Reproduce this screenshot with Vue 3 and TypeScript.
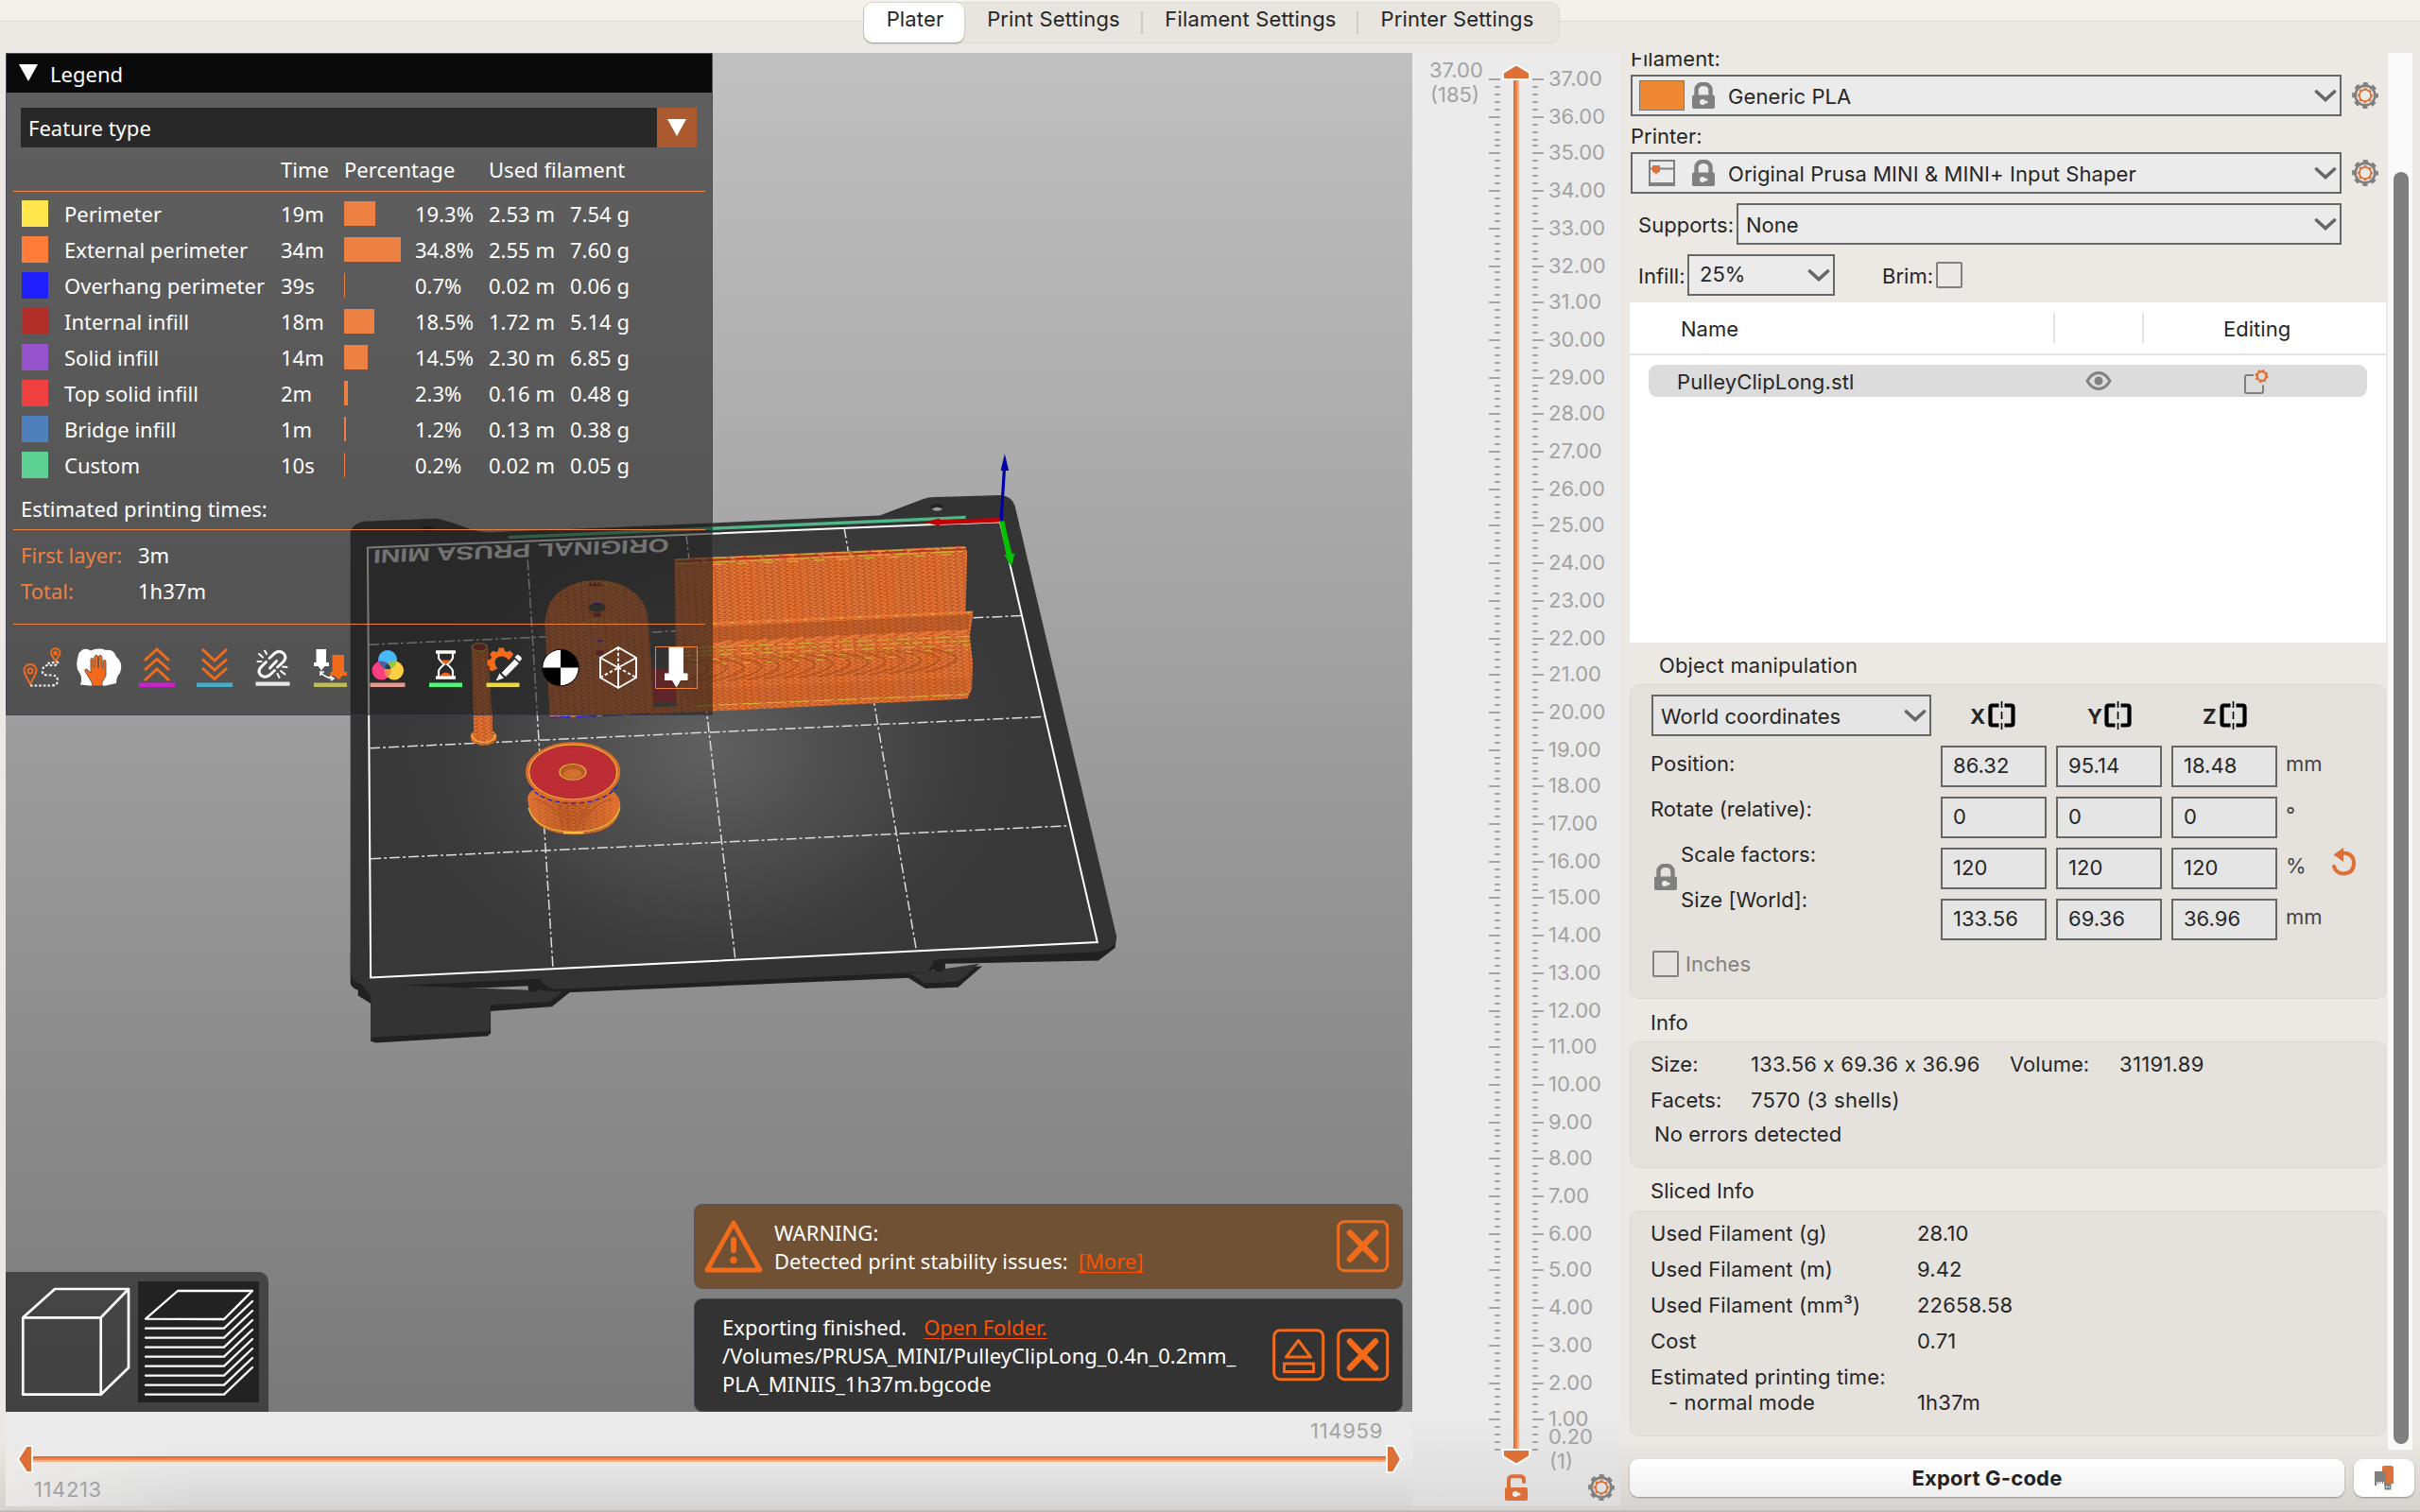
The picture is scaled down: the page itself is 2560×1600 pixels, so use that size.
<script setup lang="ts">
interface Feature {
  name: string
  color: string
  time: string
  bar: number
  pct: string
  metres: string
  grams: string
}

const features: Feature[] = [
  { name: 'Perimeter', color: '#ffe64d', time: '19m', bar: 33, pct: '19.3%', metres: '2.53 m', grams: '7.54 g' },
  { name: 'External perimeter', color: '#ff7d38', time: '34m', bar: 60, pct: '34.8%', metres: '2.55 m', grams: '7.60 g' },
  { name: 'Overhang perimeter', color: '#1f1fff', time: '39s', bar: 1, pct: '0.7%', metres: '0.02 m', grams: '0.06 g' },
  { name: 'Internal infill', color: '#b03029', time: '18m', bar: 32, pct: '18.5%', metres: '1.72 m', grams: '5.14 g' },
  { name: 'Solid infill', color: '#9654cc', time: '14m', bar: 25, pct: '14.5%', metres: '2.30 m', grams: '6.85 g' },
  { name: 'Top solid infill', color: '#f04040', time: '2m', bar: 4, pct: '2.3%', metres: '0.16 m', grams: '0.48 g' },
  { name: 'Bridge infill', color: '#4d80ba', time: '1m', bar: 2, pct: '1.2%', metres: '0.13 m', grams: '0.38 g' },
  { name: 'Custom', color: '#5ed194', time: '10s', bar: 1, pct: '0.2%', metres: '0.02 m', grams: '0.05 g' },
]

const tabs = ['Plater', 'Print Settings', 'Filament Settings', 'Printer Settings']

// One tick per 0.2 mm layer, snapped to the device grid.
const ticks = Array.from({ length: 185 }, (_, k) => ({
  y: 2 * Math.round((84 + k * 7.88) / 2) - 57,
  major: k % 5 === 0,
  label: k % 5 === 0 ? (37 - k / 5).toFixed(2) : '',
}))

const axes = ['X', 'Y', 'Z']
const manipulation = [
  { values: ['86.32', '95.14', '18.48'], unit: 'mm' },
  { values: ['0', '0', '0'], unit: '°' },
  { values: ['120', '120', '120'], unit: '%' },
  { values: ['133.56', '69.36', '36.96'], unit: 'mm' },
]

const sliced = [
  ['Used Filament (g)', '28.10'],
  ['Used Filament (m)', '9.42'],
  ['Used Filament (mm³)', '22658.58'],
  ['Cost', '0.71'],
]

const layers = [0, 1, 2, 3, 4, 5, 6, 7]
const waves = Array.from({ length: 15 }, (_, i) => i)
</script>

<template>
  <div class="app">
    <svg class="defs" width="0" height="0">
      <symbol id="lock" viewBox="0 0 24 28">
        <path d="M4.5 15V8a7.5 6.3 0 0 1 15 0v7" fill="none" stroke="#808080" stroke-width="4.4" />
        <rect y="13.5" width="24" height="14.5" rx="2" fill="#808080" />
        <circle cx="11" cy="21" r="3" fill="#ebebeb" /><rect x="11" y="19.8" width="5.5" height="2.6" rx="1.2" fill="#ebebeb" />
      </symbol>
      <symbol id="gear" viewBox="0 0 28 28">
        <circle cx="14" cy="14" r="12.3" fill="none" stroke="#808080" stroke-width="3.2" stroke-dasharray="5.2 4.46" stroke-dashoffset="2.6" />
        <circle cx="14" cy="14" r="10.4" fill="none" stroke="#808080" stroke-width="2.6" />
        <circle cx="14" cy="14" r="6.2" fill="none" stroke="#dc7036" stroke-width="1.8" />
        <circle cx="14" cy="14" r="7.4" fill="none" stroke="#dc7036" stroke-width="1.6" stroke-dasharray="2.4 3.41" stroke-dashoffset="1.2" />
      </symbol>
      <symbol id="chev" viewBox="0 0 24 14">
        <path d="M2.5 3 12 11.5 21.5 3" fill="none" stroke="#666" stroke-width="3.6" stroke-linecap="round" />
      </symbol>
      <symbol id="close" viewBox="0 0 56 56">
        <rect x="1.7" y="1.7" width="52" height="52" rx="6.5" fill="none" stroke="#f26b1d" stroke-width="3" />
        <path d="M14 13.5 41 41.5M41 13.5 14 41.5" stroke="#f26b1d" stroke-width="6.4" stroke-linecap="round" />
      </symbol>
    </svg>

    <header class="top">
      <nav class="tabs">
        <span v-for="(t, i) in tabs" :key="t" class="tab" :class="['tab' + i, { on: i === 0 }]">{{ t }}</span>
      </nav>
    </header>

    <main class="main">
      <section class="left">
        <div class="viewport">
          <svg class="scene" width="1488" height="1438" viewBox="6 56 1488 1438">
            <defs>
              <radialGradient id="bed" gradientUnits="userSpaceOnUse" cx="730" cy="790" r="640">
                <stop offset="0" stop-color="#616161" /><stop offset=".35" stop-color="#505050" />
                <stop offset=".8" stop-color="#3c3c3c" /><stop offset="1" stop-color="#383838" />
              </radialGradient>
              <pattern id="fil" width="14" height="9.5" patternUnits="userSpaceOnUse" patternTransform="rotate(-3)">
                <rect width="14" height="9.5" fill="#e87535" /><path d="M0 2.4h9M5 7.1h9" stroke="#b25322" stroke-width="2.8" />
              </pattern>
              <pattern id="red" width="7" height="7" patternUnits="userSpaceOnUse">
                <rect width="7" height="7" fill="#c92f37" /><path d="M0 1.5h3.5M3.5 5h3.5" stroke="#9a2429" stroke-width="2.2" />
              </pattern>
              <linearGradient id="spool" x1="0" x2="1">
                <stop offset="0" stop-color="#f07c34" stop-opacity=".5" /><stop offset=".45" stop-color="#9b4a1c" stop-opacity=".4" />
                <stop offset="1" stop-color="#f07c34" stop-opacity=".5" />
              </linearGradient>
            </defs>
            <g transform="translate(360 460) scale(.5357 .4209)">
              <!-- heatbed carriage and its lower edge -->
              <g fill="#212121">
                <path d="M35 1385V1410L60 1430V1525L70 1529L290 1512L297 1505V1449L418 1438L455 1400Z" />
                <path d="M20 1300V1380Q25 1400 60 1402L372 1386V1396Q382 1405 393 1396L415 1404L1157 1364L1170 1345Q1182 1356 1194 1342V1330L1497 1322L1530 1290L1533 1260Z" />
                <path d="M1112 1358 1155 1392 1220 1389 1268 1336Z" />
              </g>
              <path d="M40 1380 60 1410V1515L290 1500 296 1495V1438L302 1433 413 1426 440 1400Z" fill="#333" />
              <path d="M1125 1355 1155 1379 1220 1375 1262 1330Z" fill="#333" />
              <path fill="#333" d="M20 243Q26 222 48 218L188 211Q205 213 258 238 280 247 305 245L485 236 1065 203 1150 162Q1160 157 1175 157L1303 152Q1326 154 1332 178L1533 1262Q1530 1296 1495 1300L1180 1319 1158 1350 425 1394Q408 1394 394 1368L60 1388Q24 1382 20 1350Z" />
              <path d="M371 1372H393V1396Q382 1405 371 1396ZM1171 1322H1194V1345Q1182 1356 1171 1345Z" fill="#212121" />
              <ellipse cx="1178" cy="182" rx="12" ry="8" fill="#222" /><path d="M1168 187Q1178 178 1190 187 1178 197 1168 187Z" fill="#999" />
              <ellipse cx="174" cy="237" rx="12" ry="8" fill="#1c1c1c" />
              <path d="M54 284 1303 219 1495 1276 60 1365Z" fill="url(#bed)" />
              <path d="M54 284 1303 219 1495 1276 60 1365Z" fill="none" stroke="#fff" stroke-width="2" vector-effect="non-scaling-stroke" />
              <g stroke="#dcdcdc" stroke-width="1.5" stroke-dasharray="11 3 3 3" fill="none">
                <path vector-effect="non-scaling-stroke" d="M370 315 420 1343M683 250 780 1320M995 234 1138 1300" />
                <path vector-effect="non-scaling-stroke" d="M56 528 1345 455M58 788 1392 709M60 1066 1440 983" />
              </g>
              <path d="M332 254 1235 204V212L332 262Z" fill="#4fb888" />
              <path d="M1303 209 1184 214V210L1152 220 1184 230V226L1304 220Z" fill="#c00000" />
              <path d="M1302 216 1308 90H1304L1312 48 1320 90H1314L1308 216Z" fill="#0000a8" />
              <path d="M1302 219 1315 302H1311L1325 332 1332 298H1326L1311 217Z" fill="#00c000" />

              <!-- arch plate -->
              <path d="M414 713 404 480C404 402 450 366 507 366 565 366 608 410 608 470L612 540 620 700Z" fill="url(#fil)" />
              <path d="M616 590H668V672H618Z" fill="url(#red)" />
              <ellipse cx="507" cy="435" rx="17" ry="11" fill="#444" />
              <path d="M491 371H516V381H491ZM499 448H515V458H499ZM505 542H520V554H505Z" fill="#a32432" />
              <path d="M470 378Q505 366 545 380M480 474Q510 455 545 474" fill="none" stroke="#c3a62f" stroke-width="7" stroke-dasharray="3 6" />
              <path d="M508 519H518M500 425H516" stroke="#1616d8" stroke-width="3" />

              <!-- long clip body -->
              <path d="M660 312 1232 280 1238 293 1235 445 1250 443 1243 505 1249 575 1247 640 1238 664 735 695 414 713 440 700 664 682Z" fill="url(#fil)" />
              <path d="M735 484 1245 452 1240 490 735 522Z" fill="#8f431b" opacity=".38" />
              <path d="M735 472 1246 443V449L735 478Z" fill="#f07a38" opacity=".7" />
              <path d="M664 319 1236 287" stroke="#b83428" stroke-width="5" stroke-dasharray="50 8" />
              <g fill="none" stroke="#d0b038" stroke-width="2.8">
                <path d="M664 314 1236 284" stroke-dasharray="28 7" /><path d="M664 325 1236 293" stroke-dasharray="46 5 12 9" />
                <path d="M735 327 1232 300" stroke-dasharray="20 30" /><path d="M735 475 1246 447" stroke-dasharray="6 30" stroke-width="4" />
                <path d="M670 537 1243 507" stroke-dasharray="30 9" /><path d="M670 546 1243 518" stroke-dasharray="20 11 9 6" />
                <path d="M670 556 1243 529" stroke-dasharray="24 16" /><path d="M690 567 1240 540" stroke-dasharray="17 25" />
                <path d="M700 579 1180 554" stroke-dasharray="14 34" /><path d="M700 682 1238 653" stroke-dasharray="38 9" />
              </g>
              <g fill="none" stroke="#a84d1f" stroke-width="4.5" opacity=".65">
                <path v-for="i in waves" :key="i" :d="`M${675 + i * 35} ${566 - i * 1.9}q62 12 50 28t-62 30`" />
              </g>
              <g fill="none" stroke="#f58240" stroke-width="5" opacity=".7">
                <path v-for="i in waves.slice(0, 14)" :key="i" :d="`M${740 + i * 36} ${530 - i * 2}l30 -13`" />
              </g>
              <path d="M670 640 1246 610 1238 650 690 680Z" fill="#a84d1f" opacity=".2" />
              <path d="M414 711 620 702" stroke="#1515e0" stroke-width="3" stroke-dasharray="40 12" />

              <!-- pin -->
              <path d="M259 535 264 755H301L292 535Z" fill="url(#fil)" />
              <ellipse cx="283" cy="760" rx="26" ry="21" fill="url(#fil)" />
              <path d="M259 753Q262 772 283 774 304 772 307 753" fill="none" stroke="#e8c13c" stroke-width="2.5" />
              <path d="M264 690H300V762H266Z" fill="url(#fil)" />
              <ellipse cx="275" cy="534" rx="15" ry="10" fill="#9f2631" stroke="#c3a62f" stroke-width="3" />

              <!-- pulley -->
              <path d="M371 925Q365 890 400 890H525Q553 900 553 935 548 1005 461 1006 375 1003 371 925Z" fill="url(#fil)" />
              <path d="M371 925Q365 890 400 890H525Q553 900 553 935 548 1005 461 1006 375 1003 371 925Z" fill="url(#spool)" />
              <g fill="none" stroke="#a84d1f" stroke-width="3" opacity=".55">
                <path d="M380 915Q430 930 440 985M390 905Q445 925 450 990M540 915Q490 930 480 985M530 905Q475 925 470 990" />
                <ellipse cx="459" cy="945" rx="28" ry="24" /><ellipse cx="459" cy="945" rx="15" ry="14" />
              </g>
              <path d="M372 938Q383 996 461 999 540 996 552 938" fill="none" stroke="#e3b63a" stroke-width="3" />
              <path d="M440 1001H480" stroke="#f0d040" stroke-width="4" />
              <path d="M374 885Q400 926 459 926 520 926 546 885" fill="none" stroke="#2020cc" stroke-width="3" stroke-dasharray="9 7" />
              <ellipse cx="459.5" cy="848" rx="91" ry="73" fill="url(#red)" stroke="#e06b2b" stroke-width="5" />
              <ellipse cx="459.5" cy="848" rx="87" ry="69" fill="none" stroke="#e8c13c" stroke-width="2.5" />
              <ellipse cx="459" cy="848" rx="26" ry="20" fill="#b85c24" stroke="#dcb43c" stroke-width="2.5" />
              <ellipse cx="459" cy="853" rx="18" ry="12" fill="#d3702f" />
            </g>
            <text class="bedname" transform="translate(708 570) rotate(177.8) skewX(-5)" textLength="313" lengthAdjust="spacingAndGlyphs">ORIGINAL PRUSA MINI</text>
          </svg>

          <div class="legend">
            <div class="lhead"><i class="tri" /><span>Legend</span></div>
            <div class="lbody">
              <div class="lcombo"><span>Feature type</span><b><i class="tri" /></b></div>
              <div class="lrow lcols"><span /><span /><span>Time</span><span class="span2">Percentage</span><span class="span2">Used filament</span></div>
              <div v-for="f in features" :key="f.name" class="lrow">
                <i class="sw" :style="{ background: f.color }" /><span>{{ f.name }}</span><span>{{ f.time }}</span>
                <i class="bar" :style="{ width: f.bar + 'px' }" /><span>{{ f.pct }}</span><span>{{ f.metres }}</span><span>{{ f.grams }}</span>
              </div>
              <div class="est">Estimated printing times:</div>
              <div class="times">
                <div><em>First layer:</em><span>3m</span></div>
                <div><em>Total:</em><span>1h37m</span></div>
              </div>
              <div class="icons">
                <svg viewBox="0 0 60 56"><g fill="none" stroke="#f26b1d" stroke-width="2"><path d="M18 45C14 37 11.5 34 11.5 30.5a6.5 6.5 0 0 1 13 0C24.5 34 22 37 18 45Z" /><circle cx="18" cy="31" r="2.6" /><path d="M44.7 20.5C42 16 40 14 40 12a4.8 4.8 0 0 1 9.6 0C49.6 14 47.5 16 44.7 20.5Z" /><circle cx="44.7" cy="12.2" r="1.5" /></g><path d="M18 46.5H40Q47 46.5 47 41T40 35.5H36Q30 35 31 30T37 25H44Q49 23 46.5 21.5L36 23" fill="none" stroke="#eee" stroke-width="2.2" stroke-dasharray="2.6 2" /></svg>
                <svg viewBox="0 0 60 56"><path d="M8.5 12Q14 5 21 9.5 29 6 37 9 45 7 48 16 56 22 52 33 48 37 48 44L37 46.5H20L10 45.5Q13 38 8.5 32T8.5 12Z" fill="#fff" /><path d="M22 43 14.5 30.5Q15.5 27.5 18 30L21 33V18.5Q22.5 15.5 24 18.5V27H25V15.5Q27 12.5 28.5 15.5V27H29.5V15.5Q31.5 12.5 33 16.5V28H34V20.5Q36.5 17.5 37 21.5V36L33 43V47H23Z" fill="#f26b1d" stroke="#444" stroke-width=".8" /></svg>
                <svg viewBox="0 0 60 56"><path d="M17 20 30 8 43 20M17 30 30 18.5 43 30M17 41 30 29 43 41" fill="none" stroke="#f26b1d" stroke-width="3" /><path d="M11 43.5H49V48H11Z" fill="#cb22cb" /></svg>
                <svg viewBox="0 0 60 56"><path d="M17 8 30 20 43 8M17 18.5 30 30 43 18.5M17 28 30 39.5 43 28" fill="none" stroke="#f26b1d" stroke-width="3" /><path d="M11 43.5H49V48H11Z" fill="#46aecb" /></svg>
                <svg viewBox="0 0 60 56"><g fill="none" stroke="#fff" stroke-width="3" stroke-linecap="round"><path d="M27 17.5 33 12Q38 8.5 42 12.5T41.5 21.5L35.5 27M23.5 21.5 18 27Q14 32 18 35.5T27 35.5L32.5 30.5M27.5 28 34.5 20.5" /><path stroke-width="2" d="M22 9.5 24 13M16 13 20 16.5M14.5 21 18.5 21M41 26.5 45.5 27M39 31 43.5 34.5M35.5 34 37.5 38" /></g><path d="M12.5 42.5H48.5V46.8H12.5Z" fill="#eae5e8" /></svg>
                <svg viewBox="0 0 60 56"><path d="M15.5 8H26V22H29V26H24.5L21 30.5 17.5 26H13V22H15.5Z" fill="#fff" /><path d="M32.5 14H45V32H48V36H43L39.5 40.5 35 36H30.5V32H32.5Z" fill="#f26b1d" /><path d="M20 32Q24 38 33 39M20 36V32H24M30 36.5 34 39 31 41" fill="none" stroke="#fff" stroke-width="1.6" /><path d="M13 43.5H48V48H13Z" fill="#bfbc5b" /></svg>
                <svg viewBox="0 0 60 56"><circle cx="30" cy="19" r="10" fill="#46b9fb" /><circle cx="23.5" cy="30.5" r="10" fill="#fb3f80" /><circle cx="37" cy="30.5" r="10" fill="#fbcf3f" /><path d="M30 22.9A10 10 0 0 1 30 38.1 10 10 0 0 1 30 22.9Z" fill="#fb8a52" /><path d="M27 30.5 30 22.9Q34 20 39.5 20.7 38 27.5 32 28.8Z" fill="#8cc24a" /><path d="M20.5 20.9Q26 20 30 22.9L33 28.8Q23 29.5 20.5 20.9Z" fill="#4f62a4" /><path d="M30 22.9Q33 26 33.4 28.4 30 29.6 27 28.6 27.5 25.5 30 22.9Z" fill="#1f3f5c" /><path d="M11.5 43.5H48.5V48H11.5Z" fill="#e39a8c" /></svg>
                <svg viewBox="0 0 60 56"><path d="M20 11H41M20 38H41" stroke="#fff" stroke-width="3.4" /><path d="M23 12V17Q24 20 29 24 24 28 23 31V37M38 12V17Q37 20 32 24 37 28 38 31V37" fill="none" stroke="#fff" stroke-width="2.2" /><path d="M25 19.5H36Q33 23 30.5 24 28 23 25 19.5ZM25 36Q26 33 30.5 32.5 35 33 36 36Z" fill="#f2601d" /><path d="M13 43.5H48V48H13Z" fill="#4df57c" /></svg>
                <svg viewBox="0 0 60 56"><path d="M18 31.5 15.5 29 16.5 26.5 13.5 25V19.5L17 18.5 18 16 16 13.5 19.5 9.5 22.5 11 25 10 25.5 6.5H31L32 10 34.5 11 37.5 9.5 41 13 39.5 16 36 19.5Q33 15.5 28 15.5 21.5 16.5 21.5 22 22 26 24.5 28.5Z" fill="#f26b1d" /><path d="M28 33 42.5 18 47.5 23 33 37.5Z" fill="#fff" stroke="#222" stroke-width="1" /><path d="M42.5 16.5 45.5 13.5Q49 15 50 18.5L47.5 21Z" fill="#fff" /><path d="M26.5 33.5 31 38.5 22.5 41.5Z" fill="#fff" /><path d="M12.5 43.5H47.5V48H12.5Z" fill="#ecd73e" /></svg>
                <svg viewBox="0 0 60 56"><circle cx="30" cy="27.5" r="19.3" fill="#000" /><path d="M30 27.5H11A19 19 0 0 1 30 8.5ZM30 27.5H49A19 19 0 0 1 30 46.5Z" fill="#fff" /><circle cx="30" cy="27.5" r="19.3" fill="none" stroke="#111" stroke-width="1" /></svg>
                <svg viewBox="0 0 60 56"><g fill="none" stroke="#fff" stroke-width="1.9"><path d="M30 6 49 17V38L30 49 11 38V17ZM11 17 30 27.5 49 17M30 27.5V49" /><path d="M30 6V27.5L11 38M30 27.5 49 38" stroke-dasharray="3.5 2.2" /></g></svg>
                <svg viewBox="0 0 60 56"><path d="M22.5 5.5H38V33.5H42.5V41H35L30.5 48.5 26 41H18V33.5H22.5Z" fill="#fff" /><path d="M8.5 5.5H52.5V49.5H8.5Z" fill="none" stroke="#ed8144" /></svg>
              </div>
            </div>
          </div>

          <div class="views">
            <svg width="278" height="148" viewBox="0 0 278 148">
              <rect x="140" y="10" width="128" height="128" fill="#222" />
              <g fill="none" stroke="#fff" stroke-width="2.7" stroke-linejoin="round" stroke-linecap="round">
                <path d="M18.3 48.3H100.7V129.7H18.3ZM18.3 48.3 52 18H130L100.7 48.3M130 18V101.3L100.7 129.7" />
                <path d="M148 49.7 182 20H261L231 50Z" stroke-width="2.3" />
                <path v-for="k in layers" :key="k" :d="`M148 ${59.7 + k * 10}H231L261 ${31 + k * 10}`" stroke-width="2.3" />
              </g>
            </svg>
          </div>

          <div class="notes">
            <div class="note warn">
              <svg class="wtri" width="64" height="58" viewBox="0 0 64 58"><path d="M32 4 60 54H4Z" fill="none" stroke="#f26b1d" stroke-width="5" stroke-linejoin="round" /><path d="M32 22V33" stroke="#f26b1d" stroke-width="6" stroke-linecap="round" /><circle cx="32" cy="43.5" r="3.6" fill="#f26b1d" /></svg>
              <div class="ntext"><p>WARNING:</p><p>Detected print stability issues:<a class="more">[More]</a></p></div>
              <svg class="btn" width="56" height="56"><use href="#close" /></svg>
            </div>
            <div class="note done">
              <div class="ntext"><p>Exporting finished.<a class="open">Open Folder.</a></p><p class="path">/Volumes/PRUSA_MINI/PulleyClipLong_0.4n_0.2mm_</p><p>PLA_MINIIS_1h37m.bgcode</p></div>
              <svg class="btn eject" width="56" height="56" viewBox="0 0 56 56"><g fill="none" stroke="#f26b1d" stroke-width="3"><rect x="1.7" y="1.7" width="52" height="52" rx="6.5" /><path d="M27.5 12.5 40.5 30H14.5Z" stroke-linejoin="round" /><path d="M12.5 37H43.5V45.5H12.5Z" /></g></svg>
              <svg class="btn" width="56" height="56"><use href="#close" /></svg>
            </div>
          </div>
        </div>
        <div class="hslider">
          <span class="hmax">114959</span>
          <svg width="1488" height="30" viewBox="6 1529 1488 30">
            <path d="M33 1541H1468v2H33Z" fill="#dc7036" /><path d="M33 1543H1468v2H33Z" fill="#ee8650" /><path d="M33 1545H1468v2H33Z" fill="#f6b08a" />
            <path d="M34 1530H28L19 1544 28 1558H34ZM1467 1530H1474L1482 1544 1474 1558H1467Z" fill="#dc7036" stroke="#fff" stroke-width="2" />
          </svg>
          <span class="hmin">114213</span>
        </div>
      </section>

      <section class="vslider">
        <svg width="220" height="1538" viewBox="1494 0 220 1538">
          <g fill="#a5a5a5">
            <template v-for="t in ticks" :key="t.y">
              <rect :x="t.major ? 1575 : 1581" :y="t.y" :width="t.major ? 12 : 6" height="2" />
              <rect x="1621" :y="t.y" :width="t.major ? 12 : 6" height="2" />
            </template>
          </g>
          <g class="vtext">
            <template v-for="t in ticks" :key="t.y">
              <text v-if="t.label" x="1638" :y="t.y + 7.5">{{ t.label }}</text>
            </template>
            <text x="1638" y="1472">0.20</text><text x="1639" y="1498">(1)</text>
            <text x="1512" y="26">37.00</text><text x="1513" y="52">(185)</text>
          </g>
          <path d="M1601 28h2V1479h-2Z" fill="#dc7036" /><path d="M1603 28h2V1479h-2Z" fill="#ee8650" /><path d="M1605 28h2V1479h-2Z" fill="#f6b08a" />
          <path d="M1590 28V21L1604 12.5 1618 21V28ZM1590 1478V1485L1604 1493.5 1618 1485V1478Z" fill="#dc7036" stroke="#fff" stroke-width="2" />
          <g transform="translate(1592 1504)"><path d="M4 16V6.5Q4 2.2 8 2.2H16Q20 2.2 20 6V8" fill="none" stroke="#dc7036" stroke-width="4" stroke-linecap="round" /><rect y="14" width="24" height="14" rx="2" fill="#dc7036" /><circle cx="11" cy="21" r="3" fill="#eee" /><rect x="11" y="19.8" width="5.5" height="2.6" rx="1.2" fill="#eee" /></g>
          <use href="#gear" x="1680" y="1504" width="28" height="28" />
        </svg>
      </section>

      <aside class="side">
        <div class="upper">
          <div class="scroll">
            <div class="lab fil">Filament:</div>
            <div class="prow">
              <div class="combo wide"><i class="spoolcolor" /><svg width="24" height="28"><use href="#lock" /></svg><span class="cname">Generic PLA</span><svg class="chev" width="24" height="14"><use href="#chev" /></svg></div>
              <svg class="cog" width="28" height="28"><use href="#gear" /></svg>
            </div>
            <div class="lab pr">Printer:</div>
            <div class="prow">
              <div class="combo wide"><svg class="pic" width="28" height="28" viewBox="0 0 28 28"><path d="M1 1H27V26H1ZM1 9.5H27" fill="none" stroke="#808080" stroke-width="2" /><path d="M0 24H28V28H0Z" fill="#808080" /><path d="M4 6H12V13L9.5 13.5 8 16 6.5 13.5 4 13Z" fill="#dc7036" /></svg><svg width="24" height="28"><use href="#lock" /></svg><span class="cname">Original Prusa MINI &amp; MINI+ Input Shaper</span><svg class="chev" width="24" height="14"><use href="#chev" /></svg></div>
              <svg class="cog" width="28" height="28"><use href="#gear" /></svg>
            </div>
            <div class="prow mt"><span class="sup">Supports:</span><div class="combo supc"><span>None</span><svg class="chev" width="24" height="14"><use href="#chev" /></svg></div></div>
            <div class="prow mt"><span class="inf">Infill:</span><div class="combo infc"><span>25%</span><svg class="chev" width="24" height="14"><use href="#chev" /></svg></div><span class="brim">Brim:</span><i class="check" /></div>

            <div class="list">
              <div class="lh"><span class="n">Name</span><i class="sep" /><i class="sep s2" /><span class="e">Editing</span></div>
              <div class="item"><span>PulleyClipLong.stl</span>
                <svg class="eye" width="28" height="22" viewBox="0 0 28 22"><path d="M2 11Q7 2.5 14 2.5T26 11Q21 19.5 14 19.5T2 11Z" fill="none" stroke="#808080" stroke-width="3" stroke-linejoin="round" /><circle cx="14" cy="11" r="4.5" fill="#808080" /></svg>
                <svg class="edit" width="28" height="28" viewBox="0 0 28 28"><path d="M11 8H3.5Q2 8 2 10V25.5Q2 27 4 27H19Q21 27 21 25V18.500" fill="none" stroke="#808080" stroke-width="2" /><circle cx="19.5" cy="9" r="4.8" fill="none" stroke="#dc7036" stroke-width="2.2" /><circle cx="19.5" cy="9" r="6.2" fill="none" stroke="#dc7036" stroke-width="1.6" stroke-dasharray="2.4 2.47" /></svg>
              </div>
            </div>

            <h3 class="t1">Object manipulation</h3>
            <div class="group manip">
              <div class="mleft">
                <div class="combo world"><span>World coordinates</span><svg class="chev" width="24" height="14"><use href="#chev" /></svg></div>
                <div class="ml first">Position:</div>
                <div class="ml">Rotate (relative):</div>
                <div class="scale"><svg width="24" height="28"><use href="#lock" /></svg><div><div class="ml">Scale factors:</div><div class="ml">Size [World]:</div></div></div>
                <div class="inches"><i class="check" /><span>Inches</span></div>
              </div>
              <div class="mright">
                <div v-for="a in axes" :key="a" class="axis" :class="'ax' + a"><b>{{ a }}</b>
                  <svg width="29" height="30" viewBox="0 0 29 30"><path d="M11.5 4.5H4.5Q2.5 4.5 2.5 6.5V23.5Q2.5 25.5 4.5 25.5H11.5M17.5 4.5H24.5Q26.5 4.5 26.5 6.5V23.5Q26.5 25.5 24.5 25.5H17.5" fill="none" stroke="#000" stroke-width="4.2" /><path d="M14.5 0V7M14.5 11V19M14.5 23V30" stroke="#000" stroke-width="1.6" /></svg>
                </div>
                <span />
                <template v-for="(r, i) in manipulation" :key="i">
                  <div v-for="(v, j) in r.values" :key="j" class="field">{{ v }}</div>
                  <div class="unit">{{ r.unit }}<svg v-if="i === 2" width="28" height="32" viewBox="0 0 28 32"><path d="M11 5.5Q24 5.5 24 16.5 24 27 13 27.5 5 27 3 20" fill="none" stroke="#dc7036" stroke-width="4" stroke-linecap="round" /><path d="M2.5 7.5 13 0V15Z" fill="#dc7036" /></svg></div>
                </template>
              </div>
            </div>

            <h3>Info</h3>
            <div class="group info">
              <div class="irow"><span class="ik">Size:</span><span class="iv">133.56 x 69.36 x 36.96</span><span class="vk">Volume:</span><span class="num">31191.89</span></div>
              <div class="irow"><span class="ik">Facets:</span><span class="num">7570 (3 shells)</span></div>
              <div class="irow err">No errors detected</div>
            </div>
            <h3 class="t3">Sliced Info</h3>
            <div class="group sliced">
              <div v-for="s in sliced" :key="s[0]" class="srow"><span>{{ s[0] }}</span><span>{{ s[1] }}</span></div>
              <div class="srow last">Estimated printing time:</div>
              <div class="srow mode"><span>- normal mode</span><span>1h37m</span></div>
            </div>
          </div>
          <div class="track"><i /></div>
        </div>
        <div class="actions">
          <button class="export">Export G-code</button>
          <button class="usb"><svg width="22" height="28" viewBox="0 0 22 28"><path d="M9 3Q9 1 11 1H18Q21 1 21 4V20H9Z" fill="#dc7036" /><path d="M1 7H12.5V22H1Z" fill="#808080" /><path d="M3 18H11V22.5H3Z" fill="#fff" /><path d="M4.5 18V20M7 18V20M9.5 18V20" stroke="#808080" /><path d="M11.5 20H18.5V26.5H11.5Z" fill="#808080" /><path d="M13 23.5H14.5M15.8 23.5H17" stroke="#fff" stroke-width="1.5" /></svg></button>
        </div>
      </aside>
    </main>
  </div>
</template>

<style>
body { background: #f4f1ec; }
</style>

<style scoped>
* { box-sizing: border-box; }
.app { position: relative; width: 2560px; height: 1600px; overflow: hidden; font: 22px/28px Inter, "Liberation Sans", sans-serif; letter-spacing: 0.02px; color: #262626; background: linear-gradient(#f4f1ec 22px, #dedbd5 22px, #dedbd5 23px, #ece9e4 23px, #ece9e4 1520px, #d6d3cf 1598px, #b9b7b3 1599px); }
.defs { position: absolute; }
i, em { font-style: normal; display: block; }
svg { display: block; flex: none; }
span { white-space: nowrap; }

.top { height: 56px; padding: 2px 0 0 913px; }
.tabs { display: flex; width: 737px; height: 44px; border: 1px solid #dcd9d4; border-radius: 10px; background: #e8e5e0; }
.tab { height: 42px; line-height: 35px; text-align: center; letter-spacing: 0.15px; }
.tab0 { width: 106px; padding-left: 2px; background: #fff; border-radius: 9px; box-shadow: 0 1px 2px rgba(0, 0, 0, .35); }
.tab1 { width: 189px; }
.tab2 { width: 228px; }
.tab3 { width: 209px; }
.tab1, .tab2 { background: linear-gradient(#cfccc7, #cfccc7) right 9px / 2px 24px no-repeat; }

.main { display: flex; height: 1544px; }
.left { width: 1494px; padding-left: 6px; }
.viewport { position: relative; height: 1438px; background: linear-gradient(#c0c0c0, #7a7a7a); overflow: hidden; }
.bedname { font: bold 20px "Liberation Sans", Arial, sans-serif; fill: #f0f0f0; letter-spacing: 0; }

.legend { position: absolute; left: 0; top: 0; width: 748px; height: 701px; border: 1px solid rgba(66, 66, 84, .6); font: 22px/38px "Noto Sans", sans-serif; letter-spacing: 0.02px; color: #fff; background: rgba(32, 32, 32, .6); }
.lhead { display: flex; align-items: center; gap: 13px; height: 41px; padding: 0 0 1px 13px; background: #090909; }
.lhead span { padding-top: 1px; }
.tri { width: 20px; height: 18px; background: #fff; clip-path: polygon(0 0, 100% 0, 50% 100%); }
.lbody { padding: 16px 7px 0; }
.lcombo { display: flex; justify-content: space-between; height: 42px; margin: 0 9px 0 8px; padding-left: 8px; line-height: 43px; background: #282828; }
.lcombo b { display: grid; place-items: center; width: 42px; background: #ab5b2f; }
.lrow { display: grid; grid-template-columns: 46px 229px 67px 75px 78px 86px 120px; align-items: center; height: 38px; padding-left: 9px; line-height: 38px; }
.lrow span { margin-left: -1px; }
.lcols { height: 47px; margin-bottom: 4px; border-bottom: 1px solid #ed8144; line-height: 40px; }
.span2 { grid-column: span 2; }
.sw { width: 28px; height: 28px; }
.bar { height: 26px; margin-left: -1px; background: #ed8144; }
.est { height: 50px; padding-left: 8px; line-height: 54px; border-bottom: 1px solid #ed8144; }
.times { height: 100px; padding: 8px 0 0 8px; border-bottom: 1px solid #ed8144; }
.times div { display: flex; height: 38px; line-height: 37px; }
.times em { width: 124px; color: #ed8144; }
.icons { display: flex; margin: 18px 0 0 0; }
.icons svg { width: 60px; height: 56px; margin-right: 1px; }

.views { position: absolute; left: 0; bottom: 0; border-radius: 0 10px 0 0; background: rgba(32, 32, 32, .62); }
.notes { position: absolute; right: 10px; bottom: 0; width: 750px; font: 22px/30px "Noto Sans", sans-serif; letter-spacing: 0.02px; color: #fff; }
.note { display: flex; align-items: center; border: 1px solid rgba(80, 80, 96, .7); border-radius: 9px; }
.warn { height: 90px; margin-bottom: 10px; padding: 0 13px 0 9px; background: #705133; }
.done { height: 120px; padding: 0 13px 0 29px; background: #333; }
.note p { margin: 0; white-space: nowrap; }
.ntext { flex: 1; }
.warn .ntext { padding-left: 11px; }
.note a { color: #ff5000; text-decoration: underline; text-decoration-thickness: 1px; text-underline-offset: 3px; }
.more { margin-left: 11px; }
.open { margin-left: 18px; }
.eject { margin-right: 12px; }

.hslider { height: 100px; padding-top: 4px; color: #a2a2a2; background: linear-gradient(100deg, rgba(236, 235, 233, .9) 0, rgba(236, 235, 233, 0) 200px) 0 40px / 100% 100% no-repeat, linear-gradient(#ebebeb, #e9e9e9 50%, #d6d6d6); letter-spacing: 0.7px; }
.hmax { display: block; height: 31px; line-height: 33px; padding-right: 31px; text-align: right; }
.hmin { display: block; padding: 3px 0 0 30px; letter-spacing: 0.6px; }

.vslider { width: 220px; height: 1538px; background: linear-gradient(#ebebeb 1440px, #dcdcdc); }
.vtext { font: 22px Inter, sans-serif; letter-spacing: 0; fill: #a2a2a2; }

.side { flex: 1; padding-left: 10px; }
.upper { display: flex; height: 1478px; overflow: hidden; }
.scroll { width: 802px; }
.lab { padding-left: 1px; }
.fil { height: 23px; line-height: 12px; }
.pr { height: 38px; line-height: 42px; }
.prow { display: flex; align-items: center; height: 44px; }
.mt { margin-top: 10px; }
.combo { display: flex; align-items: center; height: 44px; border: 2px solid #666; background: #ebebeb; padding: 0 3px 0 8px; }
.combo span, .prow > span { padding-top: 2px; }
.wide { width: 752px; margin-left: 1px; padding-left: 7px; }
.spoolcolor { width: 48px; height: 32px; margin-right: 8px; border: 1px solid #777; background: #ef8833; }
.pic { margin: 0 18px 0 10px; }
.cname { margin-left: 14px; letter-spacing: 0.08px; }
.chev { margin-left: auto; }
.cog { margin-left: 11px; }
.sup { width: 113px; padding-left: 9px; }
.supc { width: 640px; }
.inf { width: 61px; padding-left: 9px; }
.infc { width: 156px; padding-left: 11px; }
.infc span { margin-top: -4px; }
.brim { width: 107px; padding-left: 50px; }
.check { width: 28px; height: 28px; border: 2px solid #808080; border-radius: 2px; }
.list { width: 800px; height: 360px; margin-top: 7px; background: #fff; }
.lh { display: flex; height: 56px; align-items: center; border-bottom: 2px solid #e4e4e4; }
.lh span { padding-top: 2px; }
.lh .n { width: 448px; padding-left: 54px; }
.sep { width: 2px; height: 32px; background: #e4e4e4; }
.s2 { margin-left: 92px; }
.lh .e { padding-left: 84px; }
.item { display: flex; align-items: center; height: 34px; margin: 10px 20px 0; padding-left: 30px; background: #dcdcdc; border-radius: 9px; }
.item span { width: 432px; padding-top: 2px; letter-spacing: 0.12px; }
.edit { margin-left: 139px; }
h3 { margin: 0; height: 45px; padding-left: 22px; font-size: 22px; font-weight: 400; line-height: 50px; }
.t1 { height: 44px; padding-left: 31px; line-height: 48px; letter-spacing: 0.15px; }
.t3 { line-height: 49px; }
.group { width: 800px; border: 1px solid #dbd8d3; border-radius: 10px; background: #e5e2de; }
.manip { display: flex; height: 333px; padding: 10px 0 0 21px; }
.mleft { width: 307px; }
.world { width: 296px; margin-left: 1px; background: #e5e5e5; }
.ml { height: 48px; line-height: 49px; }
.first { margin-top: 5px; }
.scale { display: flex; align-items: center; gap: 4px; padding-left: 4px; }
.inches { display: flex; align-items: center; gap: 7px; height: 44px; margin-top: 22px; padding-left: 2px; color: #818181; }
.mright { display: grid; grid-template-columns: 112px 112px 112px 90px; grid-auto-rows: 44px; gap: 10px; }
.axis { display: flex; align-items: center; padding-left: 31px; }
.axis b { width: 19px; padding-top: 2px; font-weight: 700; }
.axY, .axZ { padding-left: 33px; }
.axY b, .axZ b { width: 18px; }
.field { padding-left: 11px; line-height: 39px; border: 2px solid #666; background: #e5e5e5; }
.unit { display: flex; gap: 26px; margin-left: -1px; line-height: 39px; color: #444; }
.info { height: 134px; padding: 4px 0 0 21px; }
.irow { display: flex; height: 38px; line-height: 39px; }
.ik { width: 106px; }
.iv { width: 274px; letter-spacing: 0.25px; }
.vk { width: 116px; }
.num { letter-spacing: 0.3px; }
.err { padding-left: 4px; line-height: 35px; letter-spacing: 0.1px; }
.sliced { height: 239px; padding: 4px 0 0 21px; }
.srow { display: grid; grid-template-columns: 282px auto; height: 37.9px; line-height: 38px; letter-spacing: 0.15px; }
.srow.last { height: 33px; }
.srow.mode { height: 28px; line-height: 27px; grid-template-columns: 263px auto; padding-left: 19px; }
.track { width: 26px; padding: 126px 4px 0 6px; background: #fafafa; }
.track i { height: 1346px; border-radius: 8px; background: #7f7f7f; }
.actions { display: flex; gap: 10px; padding-top: 10px; }
button { border: 0; padding: 0; font: 700 22px Inter, sans-serif; letter-spacing: 0.2px; color: #222; background: linear-gradient(#fefefe, #f0f0f0); border-radius: 9px; box-shadow: 0 1px 2px rgba(0, 0, 0, .35); }
.export { width: 756px; height: 40px; }
.usb { display: grid; place-items: center; width: 64px; height: 40px; background: #fff; }
</style>
